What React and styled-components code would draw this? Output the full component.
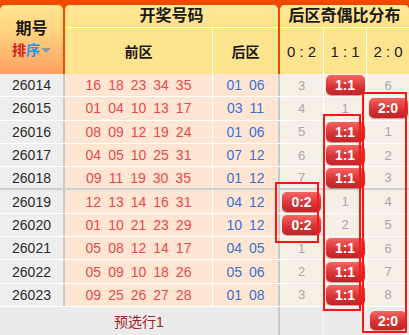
import React from 'react';
import styled, { createGlobalStyle } from 'styled-components';

const rows = [
  { issue: '26014', front: ['16', '18', '23', '34', '35'], back: ['01', '06'], dist: ['3', '1:1', '6'] },
  { issue: '26015', front: ['01', '04', '10', '13', '17'], back: ['03', '11'], dist: ['4', '1', '2:0'] },
  { issue: '26016', front: ['08', '09', '12', '19', '24'], back: ['01', '06'], dist: ['5', '1:1', '1'] },
  { issue: '26017', front: ['04', '05', '10', '25', '31'], back: ['07', '12'], dist: ['6', '1:1', '2'] },
  { issue: '26018', front: ['09', '11', '19', '30', '35'], back: ['01', '12'], dist: ['7', '1:1', '3'] },
  { issue: '26019', front: ['12', '13', '14', '16', '31'], back: ['04', '12'], dist: ['0:2', '1', '4'] },
  { issue: '26020', front: ['01', '10', '21', '23', '29'], back: ['10', '12'], dist: ['0:2', '2', '5'] },
  { issue: '26021', front: ['05', '08', '12', '14', '17'], back: ['04', '05'], dist: ['1', '1:1', '6'] },
  { issue: '26022', front: ['05', '09', '10', '18', '26'], back: ['05', '06'], dist: ['2', '1:1', '7'] },
  { issue: '26023', front: ['09', '25', '26', '27', '28'], back: ['01', '08'], dist: ['3', '1:1', '8'] },
];

const marks = [
  { left: 275, top: 182, width: 44, height: 61 },
  { left: 323, top: 114, width: 38, height: 197 },
  { left: 362, top: 92, width: 45, height: 241 },
];

const isHit = v => v.includes(':');

const App = () => (
  <Root>
    <GlobalStyle />
    <Header>
      <IssueHead>
        <HeadTitle>期号</HeadTitle>
        <Sort>
          <SortRed>排</SortRed>
          <SortBlue>序</SortBlue>
          <Caret />
        </Sort>
      </IssueHead>
      <GroupHead $w={213}>
        <GroupTitle>开奖号码</GroupTitle>
        <SubRow>
          <SubCell $w={147} $bold>前区</SubCell>
          <SubCell $w={66} $bold $line>后区</SubCell>
        </SubRow>
      </GroupHead>
      <GroupHead $w={129}>
        <GroupTitle>后区奇偶比分布</GroupTitle>
        <SubRow>
          <SubCell $w={43}>0 : 2</SubCell>
          <SubCell $w={43} $line>1 : 1</SubCell>
          <SubCell $w={43} $line>2 : 0</SubCell>
        </SubRow>
      </GroupHead>
    </Header>

    {rows.map((r, i) => (
      <Row key={r.issue} $split={i === 4}>
        <IssueCell>{r.issue}</IssueCell>
        <FrontCell>
          {r.front.map(n => <Red key={n}>{n}</Red>)}
        </FrontCell>
        <BackCell>
          {r.back.map(n => <Blue key={n}>{n}</Blue>)}
        </BackCell>
        {r.dist.map((d, j) => (
          <DistCell key={j} $line={j > 0}>
            {isHit(d) ? <Badge>{d}</Badge> : d}
          </DistCell>
        ))}
      </Row>
    ))}

    <Footer>
      <FooterLabel>预选行1</FooterLabel>
      <FooterCell />
      <FooterCell $line />
      <FooterCell $line>
        <Badge $small>2:0</Badge>
      </FooterCell>
    </Footer>

    {marks.map((m, i) => (
      <Mark key={i} $left={m.left} $top={m.top} $width={m.width} $height={m.height} />
    ))}
  </Root>
);

export default App;

const GlobalStyle = createGlobalStyle`
  body {
    margin: 0;
    background: #fff;
    font-family: "Liberation Sans", "Noto Sans CJK SC", sans-serif;
  }
`;

const Root = styled.div`
  position: relative;
  width: 409px;
  height: 335px;
  overflow: hidden;
  background: #ebebeb;
`;

const Header = styled.div`
  display: flex;
  gap: 2px;
  height: 74px;
  padding-top: 5px;
  box-sizing: border-box;
  background: #f04a00;
`;

const IssueHead = styled.div`
  width: 63px;
  border-radius: 5px 5px 0 0;
  background: linear-gradient(#ffe690, #ffd27e 40%, #ff9f60);
  display: flex;
  flex-direction: column;
  align-items: center;
  padding-top: 14px;
  box-sizing: border-box;
`;

const HeadTitle = styled.div`
  font-size: 16px;
  font-weight: bold;
  color: #1a1a1a;
  line-height: 20px;
`;

const Sort = styled.div`
  display: flex;
  align-items: center;
  margin-top: 2px;
  font-size: 14px;
  font-weight: bold;
  line-height: 18px;
`;

const SortRed = styled.span`
  color: #d42222;
`;

const SortBlue = styled.span`
  color: #1e93f0;
`;

const Caret = styled.span`
  width: 0;
  height: 0;
  margin-left: 1px;
  border-left: 5px solid transparent;
  border-right: 5px solid transparent;
  border-top: 5px solid #8c98a6;
`;

const GroupHead = styled.div`
  width: ${({ $w }) => $w}px;
  border-radius: 5px 5px 0 0;
  overflow: hidden;
  background: #ffe48f;
  display: flex;
  flex-direction: column;
`;

const GroupTitle = styled.div`
  height: 22px;
  line-height: 22px;
  border-bottom: 1px solid #fff;
  text-align: center;
  font-size: 16px;
  font-weight: bold;
  color: #1a1a1a;
  background: linear-gradient(#ffe898, #ffe08a);
`;

const SubRow = styled.div`
  flex: 1;
  display: flex;
`;

const SubCell = styled.div`
  width: ${({ $w }) => $w}px;
  box-sizing: border-box;
  border-left: ${({ $line }) => ($line ? '1px solid #fff' : 'none')};
  display: flex;
  align-items: center;
  justify-content: center;
  font-size: ${({ $bold }) => ($bold ? '14px' : '15px')};
  font-weight: ${({ $bold }) => ($bold ? 'bold' : 'normal')};
  color: #1a1a1a;
  white-space: pre;
`;

const Row = styled.div`
  display: flex;
  height: 23.3px;
  box-sizing: border-box;
  border-bottom: ${({ $split }) => ($split ? '2px solid #cfcfcf' : '1px solid #fff')};
  font-size: 14px;
`;

const IssueCell = styled.div`
  width: 65px;
  box-sizing: border-box;
  border-right: 2px solid #c9c9c9;
  background: #efeeee;
  color: #2a2a2a;
  display: flex;
  align-items: center;
  justify-content: center;
`;

const FrontCell = styled.div`
  width: 148px;
  box-sizing: border-box;
  border-right: 1px solid #fff;
  background: #ffe6d3;
  display: flex;
  align-items: center;
  justify-content: center;
  gap: 7px;
`;

const BackCell = styled.div`
  width: 67px;
  box-sizing: border-box;
  border-right: 2px solid #c9c9c9;
  background: #ffe6d3;
  display: flex;
  align-items: center;
  justify-content: center;
  gap: 7px;
`;

const Red = styled.span`
  color: #e8484c;
`;

const Blue = styled.span`
  color: #3b6fd3;
`;

const DistCell = styled.div`
  width: 43px;
  box-sizing: border-box;
  border-left: ${({ $line }) => ($line ? '1px solid #fff' : 'none')};
  background: #f5efe6;
  color: #a9a9a9;
  font-size: 13px;
  display: flex;
  align-items: center;
  justify-content: center;
`;

const Badge = styled.span`
  width: ${({ $small }) => ($small ? 36 : 39)}px;
  height: ${({ $small }) => ($small ? 19 : 20)}px;
  border-radius: 5px;
  background: linear-gradient(#f46664, #d83436 55%, #c02428);
  box-shadow: 0 1px 1px rgba(120, 0, 0, 0.35);
  color: #fff;
  font-size: 14px;
  font-weight: bold;
  display: flex;
  align-items: center;
  justify-content: center;
`;

const Footer = styled.div`
  display: flex;
  height: 28px;
  background: #ebebeb;
`;

const FooterLabel = styled.div`
  width: 280px;
  box-sizing: border-box;
  border-right: 2px solid #c9c9c9;
  display: flex;
  align-items: center;
  justify-content: center;
  font-size: 14px;
  color: #a01f1f;
`;

const FooterCell = styled.div`
  width: 43px;
  box-sizing: border-box;
  border-left: ${({ $line }) => ($line ? '1px solid #f7f7f7' : 'none')};
  display: flex;
  align-items: center;
  justify-content: center;
`;

const Mark = styled.div`
  position: absolute;
  left: ${({ $left }) => $left}px;
  top: ${({ $top }) => $top}px;
  width: ${({ $width }) => $width}px;
  height: ${({ $height }) => $height}px;
  box-sizing: border-box;
  border: 2px solid #ff1414;
  pointer-events: none;
`;
